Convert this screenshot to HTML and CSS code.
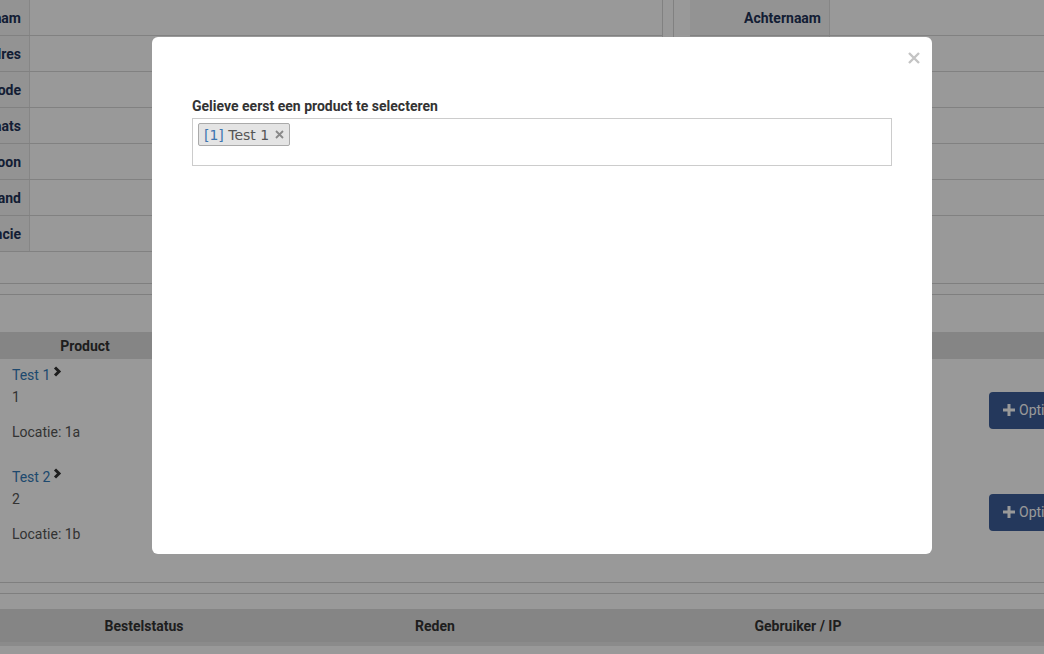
FILE: index.html
```html
<!DOCTYPE html>
<html lang="nl">
<head>
    <meta charset="UTF-8">
    <title>Bestelling</title>
    <link rel="stylesheet" href="styles.css">
</head>
<body>
    <div class="page">
        <div class="details">
            <div class="panel panel-left">
                <div class="info-row"><div class="info-label">Voornaam</div><div class="info-value"></div></div>
                <div class="info-row"><div class="info-label">Adres</div><div class="info-value"></div></div>
                <div class="info-row"><div class="info-label">Postcode</div><div class="info-value"></div></div>
                <div class="info-row"><div class="info-label">Plaats</div><div class="info-value"></div></div>
                <div class="info-row"><div class="info-label">Telefoon</div><div class="info-value"></div></div>
                <div class="info-row"><div class="info-label">Land</div><div class="info-value"></div></div>
                <div class="info-row"><div class="info-label">Provincie</div><div class="info-value"></div></div>
            </div>
            <div class="panel panel-right">
                <div class="info-row"><div class="info-label">Achternaam</div><div class="info-value"></div></div>
                <div class="info-row"><div class="info-label">Huisnummer</div><div class="info-value"></div></div>
                <div class="info-row"><div class="info-label">E-mail</div><div class="info-value"></div></div>
                <div class="info-row"><div class="info-label">Bedrijf</div><div class="info-value"></div></div>
                <div class="info-row"><div class="info-label">Mobiel</div><div class="info-value"></div></div>
                <div class="info-row"><div class="info-label">Btw-nummer</div><div class="info-value"></div></div>
            </div>
        </div>

        <div class="divider"></div>

        <table class="products">
            <colgroup>
                <col style="width:170px"><col style="width:270px"><col style="width:270px"><col style="width:271px"><col style="width:149px">
            </colgroup>
            <thead>
                <tr><th>Product</th><th>Aantal</th><th>Prijs</th><th>Totaal</th><th></th></tr>
            </thead>
            <tbody>
                <tr>
                    <td class="product-cell">
                        <a class="product-link" href="#">Test 1</a><svg class="chevron" width="9" height="11" viewBox="0 0 9 11"><polyline points="2,1.5 6,5.5 2,9.5" fill="none" stroke="#333" stroke-width="3"/></svg>
                        <div>1</div>
                        <div class="location">Locatie: 1a</div>
                    </td>
                    <td></td><td></td><td></td>
                    <td class="action-cell"><button class="option-button"><svg width="12" height="12" viewBox="0 0 12 12"><path d="M4.5 0h3v4.5H12v3H7.5V12h-3V7.5H0v-3h4.5z" fill="#fff"/></svg>Optie toevoegen</button></td>
                </tr>
                <tr>
                    <td class="product-cell">
                        <a class="product-link" href="#">Test 2</a><svg class="chevron" width="9" height="11" viewBox="0 0 9 11"><polyline points="2,1.5 6,5.5 2,9.5" fill="none" stroke="#333" stroke-width="3"/></svg>
                        <div>2</div>
                        <div class="location">Locatie: 1b</div>
                    </td>
                    <td></td><td></td><td></td>
                    <td class="action-cell"><button class="option-button"><svg width="12" height="12" viewBox="0 0 12 12"><path d="M4.5 0h3v4.5H12v3H7.5V12h-3V7.5H0v-3h4.5z" fill="#fff"/></svg>Optie toevoegen</button></td>
                </tr>
            </tbody>
        </table>

        <div class="divider divider-bottom"></div>

        <table class="history">
            <colgroup>
                <col style="width:288px"><col style="width:294px"><col style="width:432px"><col style="width:116px">
            </colgroup>
            <thead>
                <tr><th>Bestelstatus</th><th>Reden</th><th>Gebruiker / IP</th><th>Datum</th></tr>
            </thead>
        </table>
    </div>

    <div class="backdrop"></div>

    <div class="modal">
        <div class="modal-header">
            <button class="close" aria-label="Sluiten"><svg width="12" height="12" viewBox="0 0 12 12"><path d="M1 1l10 10M11 1L1 11" stroke="#c4c4c4" stroke-width="2.4"/></svg></button>
        </div>
        <div class="modal-body">
            <label class="field-label">Gelieve eerst een product te selecteren</label>
            <div class="select-box">
                <span class="tag"><span class="tag-id">[1]</span>&nbsp;Test 1<svg class="tag-remove" width="9" height="9" viewBox="0 0 9 9"><path d="M1 1l7 7M8 1L1 8" stroke="#888" stroke-width="1.8"/></svg></span>
            </div>
        </div>
    </div>
</body>
</html>
```

FILE: styles.css
```css
* {
    box-sizing: border-box;
}

body {
    margin: 0;
    font-family: Roboto, 'Liberation Sans', sans-serif;
    font-size: 14px;
    color: #333;
    background: #fff;
    overflow: hidden;
}

.page {
    width: 1044px;
    height: 654px;
    overflow: hidden;
}

/* klantgegevens */
.details {
    display: flex;
    gap: 10px;
    width: 1230px;
    margin-left: -100px;
}

.panel-left {
    width: 763px;
    border-right: 1px solid #d8d8d8;
}

.panel-right {
    flex: 1;
    border-left: 1px solid #d8d8d8;
    padding-left: 16px;
}

.info-row {
    display: flex;
    height: 36px;
    border-bottom: 1px solid #d8d8d8;
}

.info-label {
    width: 130px;
    display: flex;
    align-items: center;
    justify-content: flex-end;
    padding-right: 8px;
    background: #f5f5f5;
    border-right: 1px solid #e0e0e0;
    color: #1f3358;
    font-weight: 700;
    white-space: nowrap;
}

.panel-right .info-label {
    width: 140px;
}

.info-value {
    flex: 1;
}

.divider {
    height: 12px;
    margin-top: 31px;
    border-top: 1px solid #d4d4d4;
    border-bottom: 1px solid #d4d4d4;
}

.divider-bottom {
    margin-top: 19px;
}

/* producten */
.products,
.history {
    width: 1130px;
    table-layout: fixed;
    border-collapse: separate;
    border-spacing: 0;
}

.products {
    margin-top: 37px;
}

.products th,
.history th {
    padding: 0;
    background: #dedede;
    color: #333;
    font-weight: 700;
    text-align: center;
}

.products th {
    height: 27px;
}

.products td {
    padding: 5px 12px 18px;
    line-height: 22px;
    color: #555;
    vertical-align: top;
}

.product-link {
    color: #337ab7;
    text-decoration: none;
}

.chevron {
    margin-left: 3px;
    vertical-align: top;
    margin-top: 2px;
}

.location {
    margin-top: 13px;
}

.products td.action-cell {
    padding: 0 0 0 8px;
    vertical-align: middle;
}

.option-button {
    display: flex;
    align-items: center;
    gap: 4px;
    height: 37px;
    padding: 0 14px;
    border: none;
    border-radius: 4px;
    background: #3c5e99;
    color: #fff;
    font-family: Roboto, 'Liberation Sans', sans-serif;
    font-size: 14px;
    white-space: nowrap;
}

.history {
    margin-top: 15px;
}

.history th {
    box-sizing: content-box;
    height: 33px;
    border-bottom: 4px solid #e8e8e8;
}

/* modal */
.backdrop {
    position: fixed;
    inset: 0;
    background: rgba(0, 0, 0, 0.4);
}

.modal {
    position: fixed;
    left: 152px;
    top: 37px;
    width: 780px;
    height: 517px;
    background: #fff;
    border-radius: 6px;
}

.modal-header {
    display: flex;
    justify-content: flex-end;
    padding: 13px 12px 0;
    height: 31px;
}

.close {
    display: block;
    padding: 0;
    margin-top: -3px;
    border: none;
    background: none;
    line-height: 0;
}

.modal-body {
    padding: 28px 40px 0;
}

.field-label {
    display: block;
    margin-bottom: 2px;
    line-height: 20px;
    font-weight: 700;
    color: #333;
}

.select-box {
    height: 48px;
    padding: 4px 5px;
    border: 1px solid #ccc;
}

.tag {
    display: inline-flex;
    align-items: center;
    height: 23px;
    padding: 0 5px;
    border: 1px solid #aaa;
    border-radius: 2px;
    background: #e4e4e4;
    font-family: 'DejaVu Sans', sans-serif;
    font-size: 14px;
    color: #555;
}

.tag-id {
    color: #3d76b0;
}

.tag-remove {
    margin-left: 6px;
}
```
